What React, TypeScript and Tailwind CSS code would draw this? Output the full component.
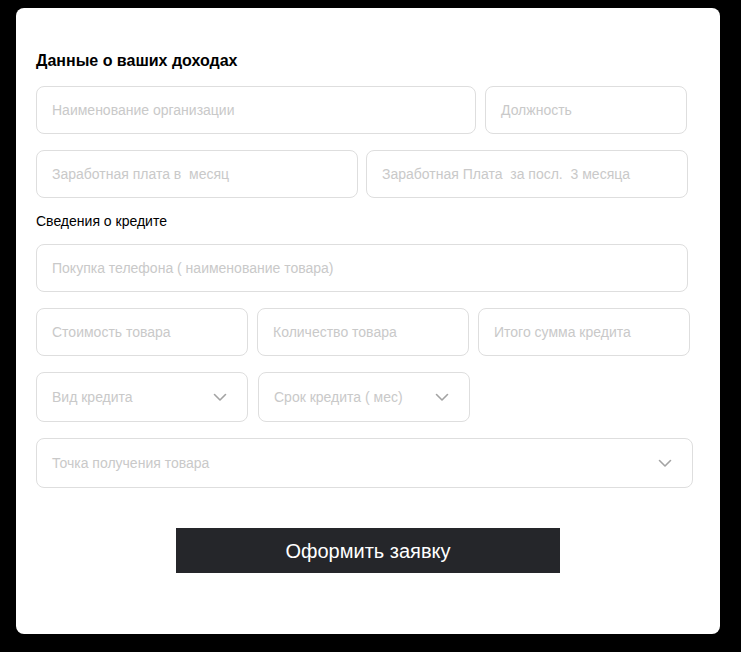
import React from "react";

const Chevron = () => (
  <svg width="14" height="9" viewBox="0 0 14 9" fill="none" className="shrink-0">
    <path d="M1.5 1.5 L7 7 L12.5 1.5" stroke="#a3a3a3" strokeWidth="1.6" strokeLinecap="round" strokeLinejoin="round" />
  </svg>
);

const Field = ({ w, text, h = "h-[48px]" }: { w: string; text: string; h?: string }) => (
  <div className={`${w} ${h} shrink-0 rounded-[8px] border border-[#dedede] flex items-center pl-[15px] text-[14px] text-[#c9c9c9] whitespace-pre`}>
    {text}
  </div>
);

const Select = ({ w, text }: { w: string; text: string }) => (
  <div className={`${w} h-[50px] shrink-0 rounded-[8px] border border-[#dedede] flex items-center justify-between pl-[15px] pr-[20px] text-[14px] text-[#c9c9c9] whitespace-pre`}>
    <span>{text}</span>
    <Chevron />
  </div>
);

export default function App() {
  return (
    <div className="min-h-[652px] w-[741px] bg-black pt-[8px] pl-[16px]" style={{ fontFamily: '"Liberation Sans", Arial, sans-serif' }}>
      <div className="w-[704px] h-[626px] bg-white rounded-[8px] pl-[20px] pt-[43px] flex flex-col">
        <div className="text-[16px] leading-[20px] font-bold text-black">Данные о ваших доходах</div>
        <div className="flex gap-[9px] mt-[15px]">
          <Field w="w-[440px]" text="Наименование организации" />
          <Field w="w-[202px]" text="Должность" />
        </div>
        <div className="flex gap-[8px] mt-[16px]">
          <Field w="w-[322px]" text="Заработная плата в  месяц" />
          <Field w="w-[322px]" text="Заработная Плата  за посл.  3 месяца" />
        </div>
        <div className="text-[14px] leading-[20px] text-black mt-[13px] whitespace-pre">Сведения о кредите</div>
        <div className="flex mt-[13px]">
          <Field w="w-[652px]" text="Покупка телефона ( наименование товара)" />
        </div>
        <div className="flex gap-[9px] mt-[16px]">
          <Field w="w-[212px]" text="Стоимость товара" />
          <Field w="w-[212px]" text="Количество товара" />
          <Field w="w-[212px]" text="Итого сумма кредита" />
        </div>
        <div className="flex gap-[10px] mt-[16px]">
          <Select w="w-[212px]" text="Вид кредита" />
          <Select w="w-[212px]" text="Срок кредита ( мес)" />
        </div>
        <div className="flex mt-[16px]">
          <Select w="w-[657px]" text="Точка получения товара" />
        </div>
        <div className="flex justify-center mt-[40px] pr-[20px]">
          <button className="w-[384px] h-[45px] bg-[#25262a] text-white text-[20px] flex items-center justify-center">
            Оформить заявку
          </button>
        </div>
      </div>
    </div>
  );
}
